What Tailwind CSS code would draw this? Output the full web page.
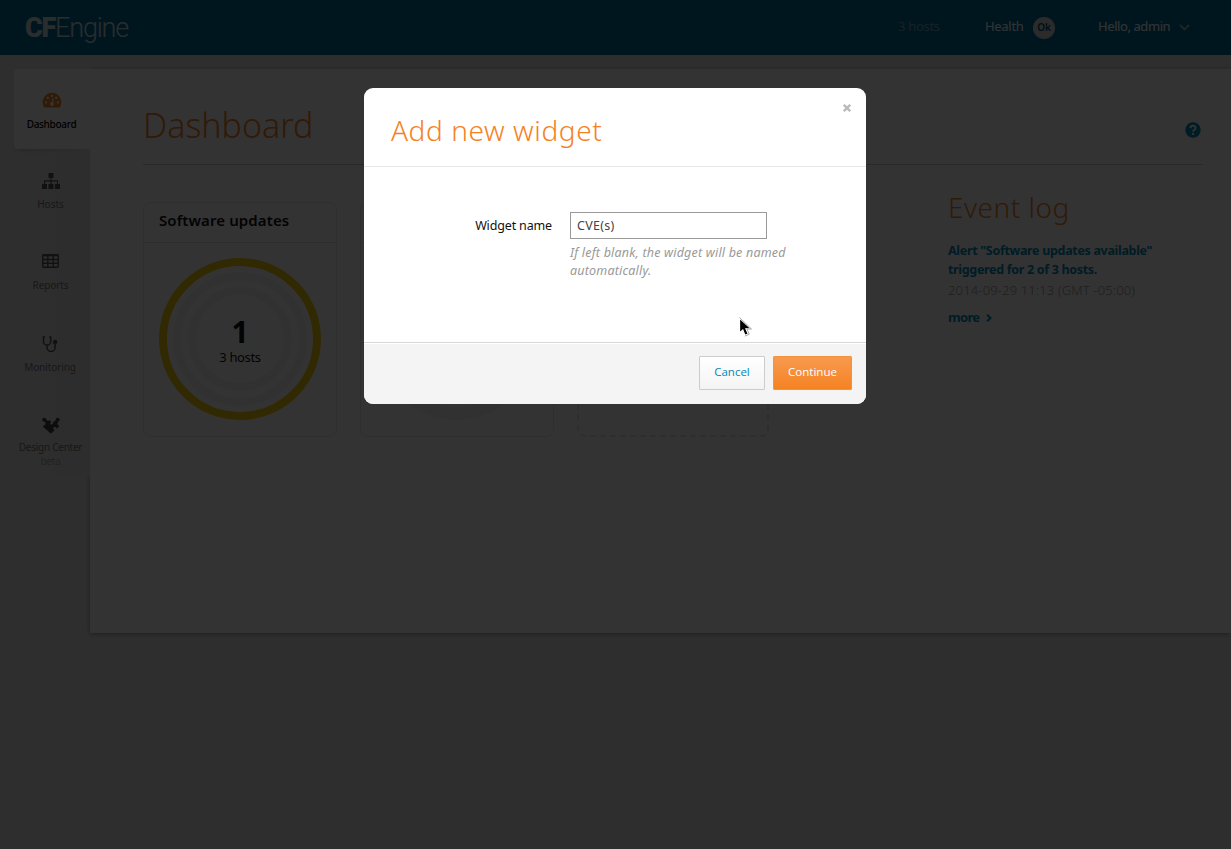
<!DOCTYPE html>
<html lang="en">
<head>
<meta charset="utf-8">
<title>CFEngine Dashboard</title>
<script src="https://cdn.jsdelivr.net/npm/@tailwindcss/browser@4"></script>
</head>
<body class="relative h-[849px] overflow-hidden bg-[#e6e6e6] font-['Noto_Sans',sans-serif] text-[13px] text-[#111]">

<header class="flex h-[55px] items-center bg-[#006f9c] pl-[25px] pr-10 text-white">
  <div class="flex-1 pt-0.5 text-[27px] leading-[53px] whitespace-nowrap font-[Roboto,sans-serif] tracking-[-1.2px] text-[#d5dde0]"><span class="font-black">CF</span><span class="font-light">Engine</span></div>
  <span class="w-[87px] pb-0.5 tracking-[-0.3px] text-[#6fa5bb]">3 hosts</span>
  <span class="w-12 pb-0.5 tracking-[-0.3px]">Health</span>
  <span class="mr-[43px] flex size-[22px] items-center justify-center rounded-full bg-[#d8d8d8] text-[10px] font-semibold text-[#005070]">Ok</span>
  <span class="w-[81px] pb-0.5 whitespace-nowrap tracking-[-0.42px]">Hello, admin</span>
  <svg class="mr-px h-[7px] w-[11px]" viewBox="0 0 11 7" fill="none" stroke="#8fb8c8" stroke-width="1.8"><path d="M1 1l4.500 4.500L10 1"/></svg>
</header>

<div class="flex pt-[14px]">
  <nav class="z-10 flex w-[90px] shrink-0 flex-col items-stretch pl-[14px] text-center text-[10px] leading-[14px] text-[#777]">
    <a class="flex h-20 flex-col items-center rounded-l bg-white pt-[23px] text-black shadow-[0_3px_4px_-2px_rgba(0,0,0,0.25)]">
      <svg class="mb-[9px] h-4 w-5" viewBox="0 0 20 16"><path fill="#f5821f" d="M2.400 15.500A9.300 9.300 0 1 1 17.600 15.500Z"/><g fill="#fff"><circle cx="4" cy="10.500" r="1.150"/><circle cx="5.800" cy="6" r="1.150"/><circle cx="10" cy="4" r="1.150"/><circle cx="14.200" cy="6" r="1.150"/><circle cx="16" cy="10.500" r="1.150"/><circle cx="10" cy="12" r="1.900"/></g><path d="M10 12l1.200-5.500" stroke="#fff" stroke-width="1.200"/></svg>
      <span class="pr-px font-medium tracking-[-0.3px]">Dashboard</span>
    </a>
    <a class="flex h-[81px] flex-col items-center bg-linear-to-r from-transparent to-[#dfdfdf] pt-6 pr-[3px]">
      <svg class="mb-2 h-4 w-[18px]" viewBox="0 0 18 16" fill="#555"><path d="M6.500 0h5v5h-2v2.300H16V11h2v5h-5v-5h2V8.500H9.600V11h1.900v5h-5v-5h1.900V8.500H3V11h2v5H0v-5h2V7.300h6.400V5H6.500z"/></svg>
      <span>Hosts</span>
    </a>
    <a class="flex h-[82px] flex-col items-center bg-linear-to-r from-transparent to-[#dfdfdf] pt-6 pr-[3px]">
      <svg class="mb-[10px] h-[14px] w-[17px]" viewBox="0 0 17 14" fill="none" stroke="#555" stroke-width="1.400"><rect x=".7" y=".7" width="15.600" height="12.600" rx="1"/><path d="M1 1.300h15" stroke-width="2"/><path d="M0 5.500h17M0 9.300h17M5.800 1v12.500M11.200 1v12.500"/></svg>
      <span class="tracking-[-0.1px]">Reports</span>
    </a>
    <a class="flex h-[81px] flex-col items-center bg-linear-to-r from-transparent to-[#dfdfdf] pt-6 pr-[4px]">
      <svg class="mb-2 h-4 w-4" viewBox="0 0 16 16" fill="none" stroke="#555" stroke-width="1.500"><path d="M3 1H1.500v4.500a3.600 3.600 0 0 0 7.200 0V1H7.200M5.100 9v2.500a4 4 0 0 0 8 0V7.500"/><circle cx="13.100" cy="6" r="1.500" fill="#555"/></svg>
      <span class="tracking-[-0.1px]">Monitoring</span>
    </a>
    <a class="flex h-[84px] flex-col items-center bg-linear-to-r from-transparent to-[#dfdfdf] pt-6 pr-[3px]">
      <svg class="mb-[6px] h-[17px] w-[18px]" viewBox="0 0 18 17" fill="#444"><circle cx="2.300" cy="2.800" r="2"/><circle cx="15.700" cy="2.800" r="2"/><path d="M2.600 4.500L4.200 2.800 6 4 7.600 3.200l1.800 1.700c-1.600.4-1.500 2.700.2 2.700 1.200 0 1.500-1 1.300-2l2.600-2.400 1.500.4 1.200 1.700-1 1.400 2.100 2.600-2.700 2.500c-.3-1.500-1.500-2.200-2.600-1.600-1.300.8-.9 2.400.8 2.900L9 16.800.8 9.500l3.100-2.600z"/></svg>
      <span class="whitespace-nowrap tracking-[-0.25px]">Design Center</span>
      <span class="tracking-[-0.2px] text-[#aaa]">beta</span>
    </a>
  </nav>

  <main class="flex h-[564px] flex-1 flex-col bg-white pl-[53px] pr-7 shadow-[0_1px_5px_rgba(0,0,0,0.35)]">
    <div class="flex h-24 items-start justify-between border-b border-[#ccc] pt-[31px]">
      <h1 class="text-[34px] leading-[50px] font-light text-[#f5821f]">Dashboard</h1>
      <svg class="mt-[22px] mr-[2px] size-4" viewBox="0 0 16 16"><circle cx="8" cy="8" r="7.700" fill="#008bb8"/><path d="M5.500 6.100c.1-3.300 5.200-3.100 5 0C10.400 7.900 8.100 7.800 8.100 9.800" fill="none" stroke="#fff" stroke-width="1.900"/><rect x="7.100" y="10.900" width="2" height="2" fill="#fff"/></svg>
    </div>
    <div class="flex pt-[37px]">
      <section class="mr-[23px] h-[235px] w-[194px] shrink-0 rounded-lg border border-[#e6e6e6]">
        <h2 class="h-10 border-b border-[#e2e2e2] pl-[15px] text-[15px] leading-[35px] font-semibold tracking-[0.1px]">Software updates</h2>
        <div class="m-[15px] flex size-[162px] flex-col items-center justify-center rounded-full border-8 border-[#f6ca08]">
          <div class="flex size-[134px] flex-col items-center justify-center rounded-full border-8 border-[#f5f5f5]">
            <div class="flex size-[104px] flex-col items-center justify-center rounded-full border-8 border-[#f5f5f5] pt-1">
              <b class="text-[30px] leading-[31px]">1</b>
              <span class="text-[13px] leading-[20px] whitespace-nowrap tracking-[-0.35px]">3 hosts</span>
            </div>
          </div>
        </div>
      </section>
      <section class="mr-[23px] h-[235px] w-[194px] shrink-0 rounded-lg border border-[#e6e6e6]">
        <div class="h-10 border-b border-[#e2e2e2]"></div>
        <div class="m-[15px] size-[162px] rounded-full border-[13px] border-[#f5f5f5]"></div>
      </section>
      <section class="h-[235px] w-[192px] shrink-0 rounded-lg border-2 border-dashed border-[#e6e6e6]"></section>
      <aside class="-mt-[15px] ml-[179px] whitespace-nowrap">
        <h2 class="text-[28px] leading-[40px] font-light tracking-[0.5px] text-[#f5821f]">Event log</h2>
        <p class="mt-[14px] text-[12.500px] leading-[19px] font-bold tracking-[-0.32px] text-[#008bb8]">Alert "Software updates available"<br>triggered for 2 of 3 hosts.</p>
        <p class="text-[13px] leading-[23px] font-light tracking-[0.15px] text-[#999]">2014-09-29 11:13 (GMT -05:00)</p>
        <p class="mt-1 flex items-center text-[13px] leading-[23px] font-bold tracking-[-0.7px] text-[#008bb8]">more<svg class="ml-[7px] h-2 w-1.5" viewBox="0 0 6 8" fill="none" stroke="#008bb8" stroke-width="2"><path d="M1 .7L4.500 4 1 7.300"/></svg></p>
      </aside>
    </div>
  </main>
</div>

<div class="absolute inset-0 z-20 bg-black/80"></div>

<div class="absolute top-[88px] left-[364px] z-30 flex h-[316px] w-[502px] flex-col overflow-hidden rounded-[9px] bg-white">
  <div class="flex h-[79px] items-start justify-between border-b border-[#e8e8e8] pt-4 pr-[15px] pl-[27px]">
    <h2 class="pt-1.5 text-[28px] leading-[40px] font-light tracking-[0.6px] text-[#f5821f]">Add new widget</h2>
    <svg class="size-2" viewBox="0 0 8 8" stroke="#bbb" stroke-width="2.400"><path d="M.8.8l6.400 6.400M7.200.8L.8 7.200"/></svg>
  </div>
  <div class="flex h-[175px] items-start pt-[45px]">
    <label class="w-[188px] text-right text-[12.500px] leading-[27px] tracking-[-0.15px]">Widget name</label>
    <div class="ml-[18px] w-[240px]">
      <div class="h-[27px] w-[197px] border border-[#999] pl-1.5 text-[12.500px] leading-[25px] tracking-[0.3px] text-[#444]">CVE(s)</div>
      <p class="mt-[5px] whitespace-nowrap text-[12.500px] leading-[18px] tracking-[0.19px] text-[#999] italic">If left blank, the widget will be named<br>automatically.</p>
    </div>
  </div>
  <div class="flex flex-1 justify-end gap-2 border-t border-[#d8d8d8] bg-[#f4f4f4] pt-[13px] pr-[14px] font-['Open_Sans',sans-serif] text-[11.500px] shadow-[inset_0_1px_0_#fff]">
    <div class="h-[34px] w-[66px] rounded-[1px] border border-[#ccc] bg-linear-to-b from-white to-[#f4f4f4] text-center leading-[30px] text-[#0088b5]">Cancel</div>
    <div class="h-[34px] w-[79px] rounded-[1px] border border-[#f5923e] bg-linear-to-b from-[#f79a4d] to-[#f5821f] text-center leading-[30px] text-white">Continue</div>
  </div>
</div>

<svg class="absolute top-[317px] left-[738px] z-40 h-5 w-[15px]" viewBox="0 0 15 20"><path d="M1.500 1v15l3.300-3 2.200 5.400 3.300-1.400-2.300-5.200H13z" fill="#000" stroke="#fff" stroke-width="1.300"/><path d="M1.500 .5L13.500 12H9l2.200 5.300-4.300 1.900" fill="none" stroke="#777" stroke-width=".6"/></svg>
</body>
</html>
